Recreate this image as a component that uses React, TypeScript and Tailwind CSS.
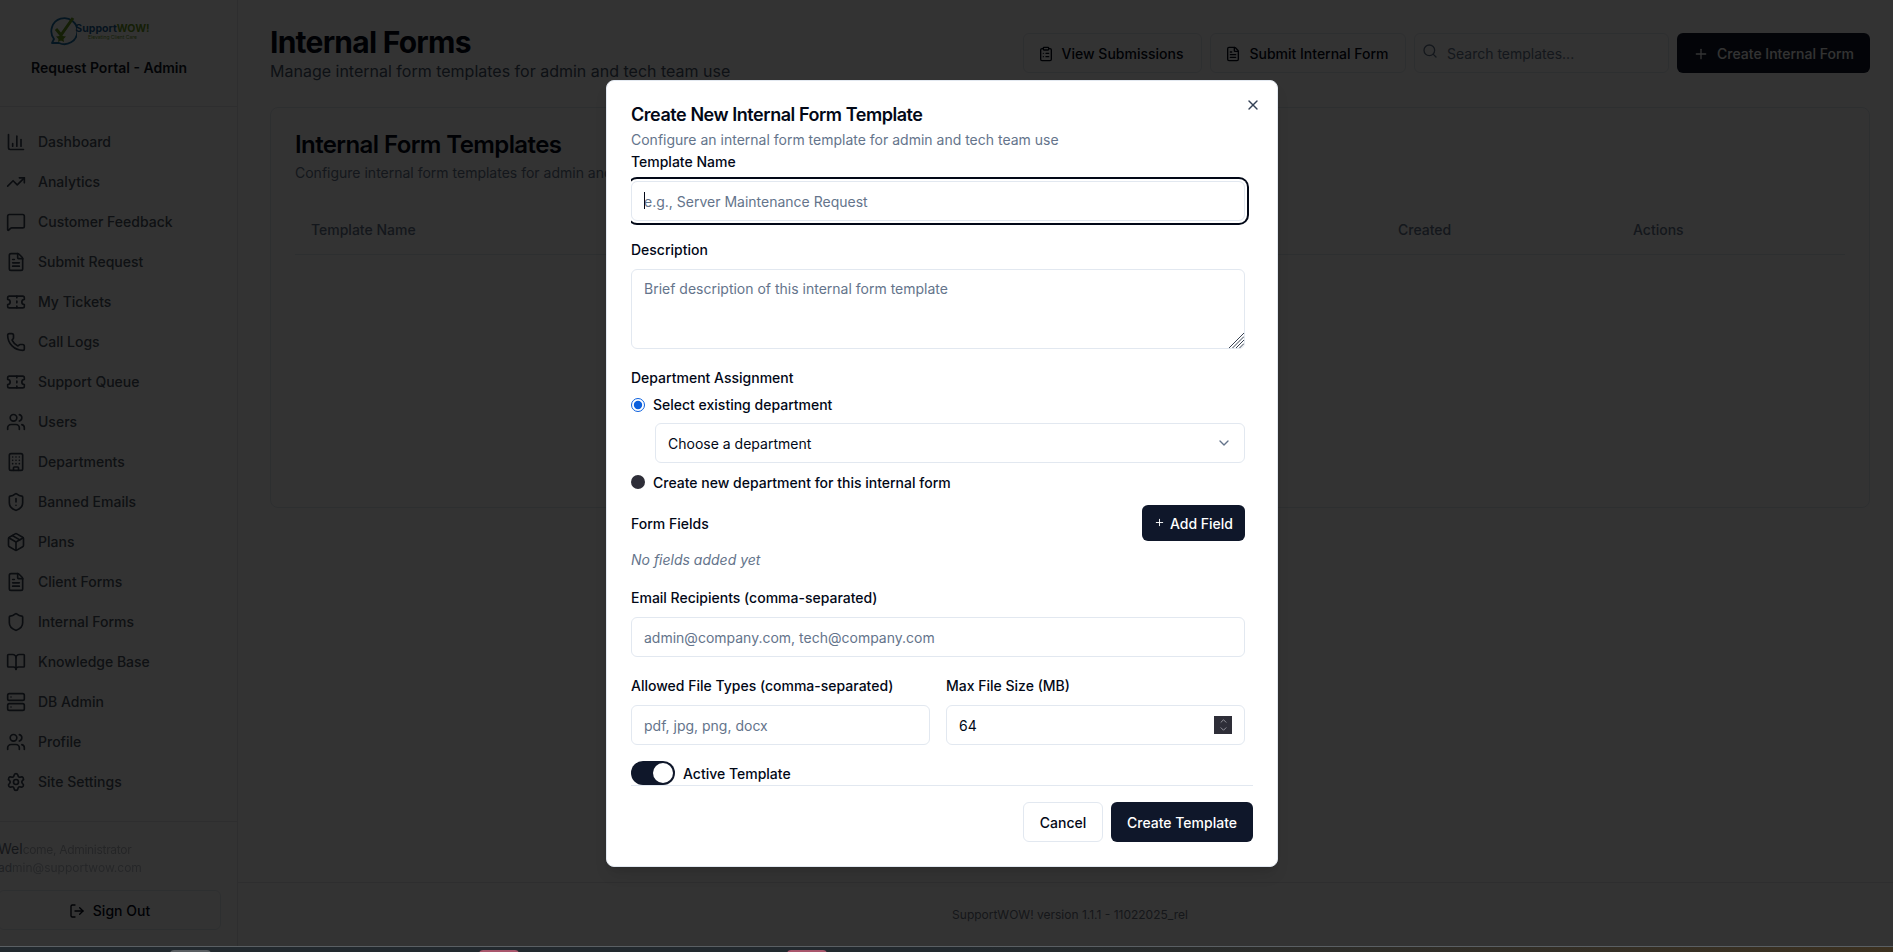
import React from "react";
import {
  BookOpen,
  Building,
  ChartColumn,
  ChevronDown,
  ChevronUp,
  ClipboardList,
  FileText,
  LogOut,
  MessageSquare,
  Package,
  Phone,
  Plus,
  Search,
  Server,
  Settings,
  Shield,
  ShieldAlert,
  Ticket,
  TrendingUp,
  Users,
  X,
} from "lucide-react";

const nav = [
  { label: "Dashboard", icon: ChartColumn },
  { label: "Analytics", icon: TrendingUp },
  { label: "Customer Feedback", icon: MessageSquare },
  { label: "Submit Request", icon: FileText },
  { label: "My Tickets", icon: Ticket },
  { label: "Call Logs", icon: Phone },
  { label: "Support Queue", icon: Ticket },
  { label: "Users", icon: Users },
  { label: "Departments", icon: Building },
  { label: "Banned Emails", icon: ShieldAlert },
  { label: "Plans", icon: Package },
  { label: "Client Forms", icon: FileText },
  { label: "Internal Forms", icon: Shield },
  { label: "Knowledge Base", icon: BookOpen },
  { label: "DB Admin", icon: Server },
  { label: "Profile", icon: Users },
  { label: "Site Settings", icon: Settings },
];

const inputCls =
  "h-10 w-full rounded-md border border-[#e2e8f0] bg-white px-3 text-sm text-[#020817] placeholder:text-[#64748b] outline-none";

function Logo() {
  return (
    <div className="flex h-[30px] items-center justify-center pr-[24px]">
      <svg width="30" height="30" viewBox="0 0 30 30" fill="none" className="shrink-0">
        <path
          d="M5 27 L7 23 A13 13 0 1 1 12 27 Z"
          stroke="#1d6fa5"
          strokeWidth="1.8"
          strokeLinejoin="round"
        />
        <path d="M9 13 L14 19 L26 2" stroke="#6a9a1f" strokeWidth="3" />
        <path d="M14 17 L15.5 20 L19 20.5 L16.5 23 L17 26 L14 24.5 L11 26 L11.5 23 L9 20.5 L12.5 20 Z" fill="#6a9a1f" />
      </svg>
      <div className="ml-[1px] flex w-[70px] flex-col items-center">
        <div className="text-[10.5px] leading-[11px] font-bold whitespace-nowrap">
          <span className="text-[#1d5f95]">Support</span>
          <span className="text-[#6a9a1f]">WOW!</span>
        </div>
        <div className="text-[5px] leading-[6px] whitespace-nowrap text-[#6a9a1f]">Elevating Client Care</div>
      </div>
    </div>
  );
}

function Sidebar() {
  return (
    <aside className="-ml-[18px] flex h-full w-[256px] shrink-0 flex-col border-r border-[#e5e7eb] bg-white">
      <div className="flex h-[107px] shrink-0 flex-col border-b border-[#e5e7eb] pt-[16px] pr-[1px]">
        <Logo />
        <div className="mt-[12px] text-center text-sm leading-5 font-semibold text-[#111827]">
          Request Portal - Admin
        </div>
      </div>
      <nav className="flex-1 pt-[15px] pl-[24px]">
        {nav.map(({ label, icon: Icon }) => (
          <div key={label} className="flex h-10 items-center gap-3 text-sm font-medium text-[#4b5563]">
            <Icon size={20} strokeWidth={2} className="text-[#374151]" />
            <span>{label}</span>
          </div>
        ))}
      </nav>
      <div className="shrink-0 border-t border-[#e5e7eb] p-4 pt-[17px]">
        <div className="text-sm leading-5 whitespace-nowrap text-[#6b7280]">
          Wel<span className="text-xs tracking-tight opacity-50 blur-[0.6px]">come, Administrator</span>
        </div>
        <div className="mt-px text-xs leading-4 whitespace-nowrap text-[#9ca3af]">
          ad<span className="opacity-70 blur-[0.6px]">min@supportwow.com</span>
        </div>
        <button className="mt-[14px] flex h-10 w-full items-center justify-center gap-2 rounded-md border border-[#e2e8f0] pt-px text-sm font-medium text-[#020817]">
          <LogOut size={16} />
          Sign Out
        </button>
      </div>
    </aside>
  );
}

function Main() {
  return (
    <main className="flex h-full w-[1664px] shrink-0 flex-col bg-white">
      <div className="flex-1 px-8 pt-[24px]">
        <div className="flex items-center justify-between">
          <div>
            <h1 className="text-3xl font-bold tracking-tight text-[#020817]">Internal Forms</h1>
            <p className="-mt-px text-base text-[#475569]">Manage internal form templates for admin and tech team use</p>
          </div>
          <div className="-mt-px flex items-center gap-2">
            <button className="flex h-10 w-[179px] items-center justify-center gap-2 rounded-md border border-[#e2e8f0] pt-px pr-[4px] text-sm font-medium text-[#020817]">
              <ClipboardList size={16} />
              View Submissions
            </button>
            <button className="flex h-10 w-[196px] items-center justify-center gap-2 rounded-md border border-[#e2e8f0] pt-px pr-[2px] text-sm font-medium text-[#020817]">
              <FileText size={16} />
              Submit Internal Form
            </button>
            <div className="relative h-10 w-[255px]">
              <Search size={16} className="absolute top-[10px] left-[8px] text-[#64748b]" />
              <input className={inputCls + " pl-[32px]"} placeholder="Search templates..." />
            </div>
            <button className="flex h-10 w-[193px] items-center justify-center gap-2 rounded-md bg-[#0f172a] pt-px text-sm font-medium text-white">
              <Plus size={16} />
              Create Internal Form
            </button>
          </div>
        </div>
        <section className="mt-6 h-[401px] rounded-lg border border-[#e2e8f0] bg-white px-6 pt-[25px] pb-6">
          <h2 className="text-2xl leading-none font-semibold tracking-tight text-[#020817]">Internal Form Templates</h2>
          <p className="mt-[6px] text-sm leading-5 text-[#64748b]">
            Configure internal form templates for admin and tech team use
          </p>
          <div className="mt-6 grid h-12 grid-cols-[1087px_235px_1fr] items-center border-b border-[#e2e8f0] px-4 pb-[2px] text-sm font-medium text-[#64748b]">
            <div>Template Name</div>
            <div>Created</div>
            <div>Actions</div>
          </div>
        </section>
      </div>
      <footer className="flex h-[64px] shrink-0 items-center justify-center border-t border-[#e5e7eb] text-xs text-[#6b7280]">
        SupportWOW! version 1.1.1 - 11022025_rel
      </footer>
    </main>
  );
}

function Label({ children, className = "" }: { children: React.ReactNode; className?: string }) {
  return <div className={"text-sm leading-5 font-medium text-[#020817] " + className}>{children}</div>;
}

function Modal() {
  return (
    <div className="flex h-[787px] w-[672px] flex-col rounded-lg border border-[#e2e8f0] bg-white px-6 pt-[25px] pb-6 text-[#020817] shadow-lg">
      <div className="relative shrink-0">
        <X size={16} className="absolute -top-[9px] -right-[8px] text-[#334155]" />
        <h2 className="text-lg leading-[18px] font-semibold tracking-tight">Create New Internal Form Template</h2>
        <p className="mt-[6px] text-sm leading-5 text-[#64748b]">
          Configure an internal form template for admin and tech team use
        </p>
      </div>
      <div className="flex-1 overflow-hidden pt-[2px] pr-2">
        <Label>Template Name</Label>
        <div className="relative mt-[9px]">
          <input
            className={inputCls + " ring-2 ring-[#020817] ring-offset-2 ring-offset-white"}
            placeholder="e.g., Server Maintenance Request"
          />
          <span className="absolute top-[11px] left-[13px] h-[17px] w-px bg-[#020817]" />
        </div>
        <Label className="mt-[19px]">Description</Label>
        <div className="relative mt-[9px]">
          <textarea
            className="block h-[80px] w-full resize-none rounded-md border border-[#e2e8f0] bg-white px-3 pt-[9px] pb-2 text-sm text-[#020817] outline-none placeholder:text-[#64748b]"
            placeholder="Brief description of this internal form template"
          />
          <svg
            width="15"
            height="15"
            viewBox="0 0 15 15"
            className="absolute right-[1px] bottom-[1px]"
            stroke="#374151"
            strokeWidth="1"
          >
            <path d="M0 15 L15 0 M3.5 15 L15 3.5 M7 15 L15 7 M10.5 15 L15 10.5" />
          </svg>
        </div>
        <Label className="mt-[19px]">Department Assignment</Label>
        <label className="mt-[7px] flex h-5 items-center gap-2 text-sm font-medium">
          <input type="radio" defaultChecked name="dept" className="m-0 -mt-px h-[14px] w-[14px] accent-[#0b5fdd]" />
          Select existing department
        </label>
        <div className="mt-[8px] ml-6 flex h-10 items-center justify-between rounded-md border border-[#e2e8f0] bg-white px-3 text-sm">
          <span className="pt-[2px]">Choose a department</span>
          <ChevronDown size={16} className="text-[#64748b]" />
        </div>
        <label className="mt-[10px] flex h-5 items-center gap-2 text-sm font-medium">
          <input type="radio" name="dept" className="m-0 -mt-[2px] h-[14px] w-[14px] appearance-none rounded-full bg-[#2e2e38]" />
          Create new department for this internal form
        </label>
        <div className="mt-[12px] flex items-center justify-between">
          <Label className="pt-px">Form Fields</Label>
          <button className="flex h-9 w-[103px] items-center justify-center gap-[5px] rounded-md bg-[#0f172a] pt-px text-sm font-medium text-white">
            <Plus size={11} className="-mt-[3px]" />
            Add Field
          </button>
        </div>
        <p className="mt-[9px] text-sm leading-5 text-[#64748b] italic">No fields added yet</p>
        <Label className="mt-[18px]">Email Recipients (comma-separated)</Label>
        <input className={inputCls + " mt-[9px] block"} placeholder="admin@company.com, tech@company.com" />
        <div className="mt-[19px] grid grid-cols-2 gap-4">
          <div>
            <Label>Allowed File Types (comma-separated)</Label>
            <input className={inputCls + " mt-[9px] block"} placeholder="pdf, jpg, png, docx" />
          </div>
          <div>
            <Label>Max File Size (MB)</Label>
            <div className="mt-[9px] flex h-10 items-center justify-between rounded-md border border-[#e2e8f0] bg-white pr-3 pl-3 text-sm">
              <span className="pt-px">64</span>
              <span className="flex h-[18px] w-[18px] flex-col items-center justify-center bg-[#2e2e38] text-[#b4b4bc]">
                <ChevronUp size={11} strokeWidth={1.75} className="-mb-[1px]" />
                <ChevronDown size={11} strokeWidth={1.75} className="-mt-[1px]" />
              </span>
            </div>
          </div>
        </div>
        <div className="mt-4 flex h-6 items-center gap-2">
          <span className="flex h-6 w-11 items-center justify-end rounded-full bg-[#0f172a] p-[2px]">
            <span className="h-5 w-5 rounded-full bg-white" />
          </span>
          <span className="pt-px text-sm font-medium">Active Template</span>
        </div>
      </div>
      <div className="flex shrink-0 justify-end gap-2 border-t border-[#e2e8f0] pt-4">
        <button className="h-10 w-[80px] rounded-md border border-[#e2e8f0] bg-white pt-px text-sm font-medium">Cancel</button>
        <button className="h-10 w-[142px] rounded-md bg-[#0f172a] pt-px text-sm font-medium text-white">Create Template</button>
      </div>
    </div>
  );
}

export default function App() {
  return (
    <div className="h-[952px] w-[1893px] overflow-hidden bg-white font-['Inter',sans-serif]">
      <div className="relative h-[946px] overflow-hidden">
        <div className="flex h-full">
          <Sidebar />
          <Main />
        </div>
        <div className="absolute inset-0 bg-black/80 pt-[80px] pl-[606px]">
          <Modal />
        </div>
      </div>
      <div className="relative h-[6px] overflow-hidden border-t border-[#5a5f63] bg-gradient-to-r from-[#22292e] via-[#22292e] via-50% to-[#3c3120]">
        <span className="absolute top-[3px] left-[170px] h-[4px] w-[41px] rounded-t-md bg-[#5b5f63]" />
        <span className="absolute top-[3px] left-[479px] h-[4px] w-[40px] rounded-t-md bg-[#a9566c]" />
        <span className="absolute top-[3px] left-[787px] h-[4px] w-[40px] rounded-t-md bg-[#a9566c]" />
      </div>
    </div>
  );
}
